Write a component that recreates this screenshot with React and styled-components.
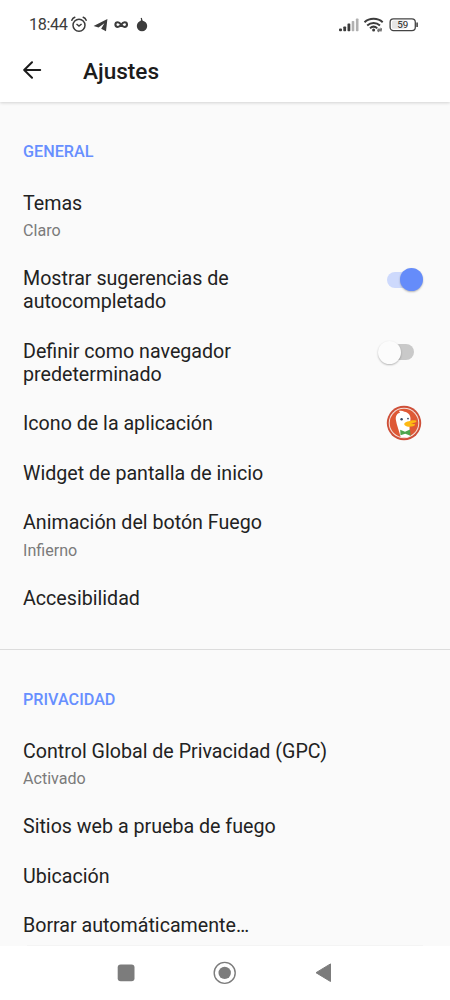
import styled, { createGlobalStyle } from 'styled-components'

const GlobalStyle = createGlobalStyle`
*{box-sizing:border-box;}
body{
margin:0;
background:#fafafa;
font-family:Roboto, "Liberation Sans", sans-serif;
}
`
const Screen = styled.div`
width:450px;
height:1000px;
display:flex;
flex-direction:column;
overflow:hidden;
background:#fafafa;
`
const TopArea = styled.header`
height:102px;
flex-shrink:0;
background:#fff;
box-shadow:0 1px 3px rgba(0,0,0,0.16);
z-index:1;
`
const StatusBar = styled.div`
height:46px;
padding:4px 31px 0 29px;
display:flex;
align-items:center;
justify-content:space-between;
color:#3c3c3c;
`
const StatusGroup = styled.div`
display:flex;
align-items:center;
`
const Clock = styled.span`
width:41px;
font-size:16.2px;
line-height:20px;
letter-spacing:-0.35px;
white-space:nowrap;
`
const TitleBar = styled.div`
height:50px;
padding-left:22px;
display:flex;
align-items:center;
`
const Title = styled.h1`
margin:0 0 0 41px;
padding-top:1px;
font-size:22.6px;
font-weight:500;
line-height:27px;
color:#1c1c1c;
`
const Content = styled.main`
height:843px;
flex-shrink:0;
overflow:hidden;
`
const Section = styled.section`
height:${props => props.$height};
padding:0 23px;
border-bottom:${props => props.$divider ? '1px solid #dcdcdc' : 'none'};
`
const SectionTitle = styled.h2`
margin:0;
padding-top:39.5px;
height:76.5px;
font-size:16.2px;
font-weight:500;
line-height:20px;
color:#678fff;
`
const Row = styled.div`
padding:13.3px 0;
display:flex;
align-items:center;
justify-content:space-between;
`
const RowTitle = styled.div`
width:${props => props.$narrow ? '250px' : 'auto'};
font-size:19.65px;
line-height:23px;
color:#222;
`
const RowValue = styled.div`
margin-top:6.5px;
font-size:16.1px;
line-height:19.2px;
color:#7b7b7b;
`
const Switch = styled.div`
width:27px;
height:16px;
margin:0 13px 21px 0;
display:flex;
align-items:center;
justify-content:${props => props.$on ? 'flex-end' : 'flex-start'};
border-radius:8px;
background:${props => props.$on ? '#cdd9fc' : '#c9c9c9'};
`
const Knob = styled.div`
width:23px;
height:23px;
flex-shrink:0;
margin:0 ${props => props.$on ? '-9px 0 0' : '0 0 -9px'};
border-radius:50%;
background:${props => props.$on ? '#658cfa' : '#fcfcfc'};
box-shadow:0 1px 2px rgba(0,0,0,0.28);
`
const AppIcon = styled.svg`
width:36px;
height:36px;
margin:-8px 5px -6px 0;
flex-shrink:0;
`
const ListEdge = styled.div`
height:1px;
flex-shrink:0;
margin:0 27px;
background:#f4f4f4;
`
const NavBar = styled.nav`
height:54px;
flex-shrink:0;
padding:0 118px 0 117px;
display:flex;
align-items:center;
justify-content:space-between;
background:#fff;
color:#7c7c7c;
`

const general = [
  { title: 'Temas', value: 'Claro' },
  { title: 'Mostrar sugerencias de autocompletado', toggle: 'on' },
  { title: 'Definir como navegador predeterminado', toggle: 'off' },
  { title: 'Icono de la aplicación', icon: true },
  { title: 'Widget de pantalla de inicio' },
  { title: 'Animación del botón Fuego', value: 'Infierno' },
  { title: 'Accesibilidad' },
]
const privacy = [
  { title: 'Control Global de Privacidad (GPC)', value: 'Activado' },
  { title: 'Sitios web a prueba de fuego' },
  { title: 'Ubicación' },
  { title: 'Borrar automáticamente…' },
]

function NotificationIcons() {
  return (
    <svg width="80" height="20" viewBox="0 0 80 20" fill="none" stroke="currentColor">
      <circle cx="9" cy="10.2" r="6" strokeWidth="1.5" />
      <path d="M1.8 5.2Q2.6 3.1 4.8 2.2M16.2 5.2Q15.4 3.1 13.2 2.2" strokeWidth="1.5" strokeLinecap="round" />
      <path d="m6.5 9 2.5 2 2.6-2" strokeWidth="1.5" />
      <path d="M23.6 10.9 37.4 4.1 36 16.2 31.2 13.8 34.4 8.2 28.6 12.4Z" fill="currentColor" stroke="none" />
      <path d="M51.2 9.6C49.8 7.8 48.6 7.2 47.8 7.2a2.4 2.4 0 0 0 0 4.8c1 0 2.1-.6 3.4-2.4s2.4-2.4 3.4-2.4a2.4 2.4 0 0 1 0 4.8c-1 0-2.1-.6-3.4-2.4" strokeWidth="2.1" />
      <circle cx="72" cy="11" r="5.2" fill="currentColor" stroke="none" />
      <path d="m69.4 7 1.8-2.1 3.2 1.6Z" fill="currentColor" stroke="none" />
      <path d="M71.2 3c.3 1 .7 1.5.6 3.4" strokeWidth="1.3" />
    </svg>
  )
}

function Signal() {
  return (
    <svg width="50" height="20" viewBox="0 0 50 20" fill="none" stroke="currentColor">
      <g fill="currentColor" stroke="none">
        <rect x="1" y="13.4" width="3" height="2.8" rx="1" />
        <rect x="5.3" y="11.6" width="2.8" height="4.6" rx=".7" />
        <rect x="9.5" y="8.4" width="2.8" height="7.8" rx=".7" />
        <rect x="13.7" y="6" width="2.6" height="10.2" rx=".7" opacity=".4" />
        <rect x="17.9" y="3.6" width="2.6" height="12.6" rx=".7" opacity=".4" />
      </g>
      <path d="M26.5 7.2c5-4.6 13.2-4.6 18.2 0M29.2 10.4c3.7-3.2 9.1-3.2 12.8 0M32 13.2c2.2-1.9 5-1.9 7.2 0" strokeWidth="2" />
      <circle cx="35.6" cy="15" r="1.5" fill="currentColor" stroke="none" />
      <path d="M39.5 14.2h4.3l-1.2-1M43.8 15.8h-4.3l1.2 1" strokeWidth="1" />
    </svg>
  )
}

function Battery() {
  return (
    <svg width="31" height="20" viewBox="0 0 31 20">
      <rect x="2.1" y="3.8" width="25.2" height="11.8" rx="3.4" fill="none" stroke="#444" strokeWidth="1.3" />
      <rect x="4" y="5.6" width="13" height="8.2" rx="1.5" fill="#e6e6e6" />
      <path d="M29.1 7.4v4.6" stroke="#444" strokeWidth="1.6" />
      <text x="14.8" y="13.2" textAnchor="middle" fontFamily="Roboto" fontSize="9.8" fill="#222">59</text>
    </svg>
  )
}

function Duck() {
  return (
    <AppIcon viewBox="0 0 36 36">
      <circle cx="18" cy="18" r="17.2" fill="#ce4f38" />
      <circle cx="18" cy="18" r="15.3" fill="#f5e3dd" />
      <circle cx="18" cy="18" r="14.3" fill="#de5936" />
      <path d="M14.5 31.8C13 25 10.6 20 10 15.5c-.9-4.6 1-7.3 4.2-8.1l-1.4-1.5c2-.5 4-.3 5.6.9 3.7.7 6 3 6.1 6.6.1 3-.8 5.2-1 8.1l.4 10c-3 1-6.5 1.2-9.4.3Z" fill="#fff" />
      <path d="M18.6 18.1c1.2-1.7 4-1.8 6-2.4 2.1-.7 6.3-.6 5.9.7-.4 1.2-3.7 1.7-5.4 2.1 1.4.7 4.1.1 4 1.2-.2 1.5-5.8 2.4-8 1.8-1.8-.4-3.6-1.6-2.5-3.4Z" fill="#fdb914" />
      <circle cx="15.6" cy="14.3" r="1.2" fill="#354761" />
      <circle cx="22" cy="13.6" r=".9" fill="#354761" />
      <path d="m14.2 24.8 4.8 2 5-2.4.5 6.4-5.2-2-4.8 1.4Z" fill="#4ca64c" />
    </AppIcon>
  )
}

function Setting({ item }) {
  return (
    <Row>
      <div>
        <RowTitle $narrow={item.toggle}>{item.title}</RowTitle>
        {item.value && <RowValue>{item.value}</RowValue>}
      </div>
      {item.toggle && (
        <Switch $on={item.toggle === 'on'}><Knob $on={item.toggle === 'on'} /></Switch>
      )}
      {item.icon && <Duck />}
    </Row>
  )
}

function App() {
  return (
    <Screen>
      <GlobalStyle />
      <TopArea>
        <StatusBar>
          <StatusGroup>
            <Clock>18:44</Clock>
            <NotificationIcons />
          </StatusGroup>
          <StatusGroup>
            <Signal />
            <Battery />
          </StatusGroup>
        </StatusBar>
        <TitleBar>
          <svg width="20" height="20" viewBox="0 0 20 20" fill="none" stroke="#1c1c1c" strokeWidth="2" strokeLinecap="round" strokeLinejoin="round">
            <path d="M18.2 9H2.4M10 1.2 2.2 9l7.8 7.8" />
          </svg>
          <Title>Ajustes</Title>
        </TitleBar>
      </TopArea>
      <Content>
        <Section $height="548px" $divider>
          <SectionTitle>GENERAL</SectionTitle>
          {general.map(item => <Setting key={item.title} item={item} />)}
        </Section>
        <Section $height="300px">
          <SectionTitle>PRIVACIDAD</SectionTitle>
          {privacy.map(item => <Setting key={item.title} item={item} />)}
        </Section>
      </Content>
      <ListEdge />
      <NavBar>
        <svg width="18" height="18"><rect x=".7" y=".5" width="16.8" height="16.8" rx="3" fill="currentColor" /></svg>
        <svg width="24" height="24" viewBox="0 0 24 24">
          <circle cx="11.7" cy="11.9" r="10.5" fill="none" stroke="currentColor" strokeWidth="1.4" />
          <circle cx="11.7" cy="11.9" r="6.2" fill="currentColor" />
        </svg>
        <svg width="17" height="20"><path d="M1 9.7 15.5.9v17.6Z" fill="currentColor" stroke="currentColor" strokeLinejoin="round" /></svg>
      </NavBar>
    </Screen>
  )
}

export default App
